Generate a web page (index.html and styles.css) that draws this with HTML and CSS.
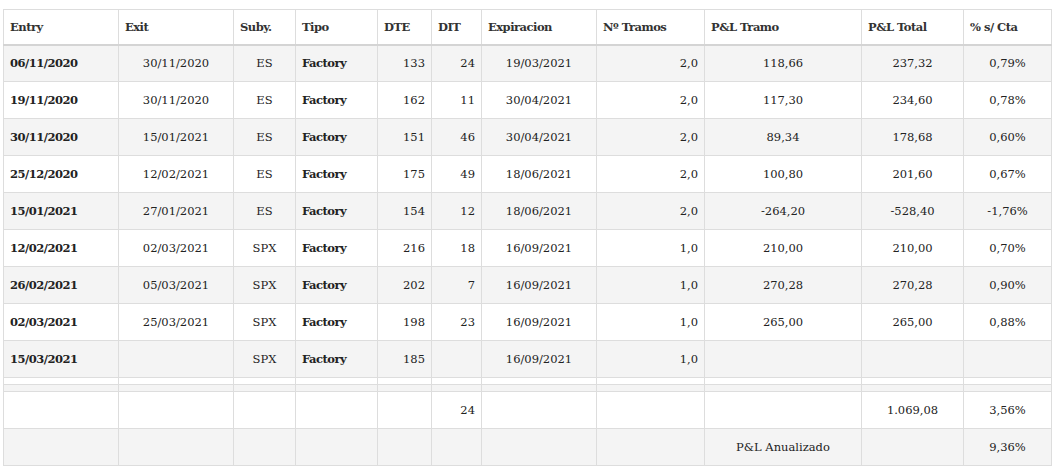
FILE: index.html
```html
<!DOCTYPE html>
<html>
<head>
<meta charset="utf-8">
<link rel="stylesheet" href="styles.css">
</head>
<body>
<table class="trades">
  <colgroup>
    <col class="c-entry"><col class="c-exit"><col class="c-suby"><col class="c-tipo"><col class="c-dte"><col class="c-dit"><col class="c-exp"><col class="c-tramos"><col class="c-pltr"><col class="c-pltot"><col class="c-pct">
  </colgroup>
  <thead>
    <tr>
      <th>Entry</th><th>Exit</th><th>Suby.</th><th>Tipo</th><th>DTE</th><th>DIT</th><th>Expiracion</th><th>Nº Tramos</th><th>P&amp;L Tramo</th><th>P&amp;L Total</th><th>% s/ Cta</th>
    </tr>
  </thead>
  <tbody>
    <tr><td class="b">06/11/2020</td><td class="c">30/11/2020</td><td class="c">ES</td><td class="b">Factory</td><td class="r">133</td><td class="r">24</td><td class="c">19/03/2021</td><td class="r">2,0</td><td class="c">118,66</td><td class="c">237,32</td><td class="c">0,79%</td></tr>
    <tr><td class="b">19/11/2020</td><td class="c">30/11/2020</td><td class="c">ES</td><td class="b">Factory</td><td class="r">162</td><td class="r">11</td><td class="c">30/04/2021</td><td class="r">2,0</td><td class="c">117,30</td><td class="c">234,60</td><td class="c">0,78%</td></tr>
    <tr><td class="b">30/11/2020</td><td class="c">15/01/2021</td><td class="c">ES</td><td class="b">Factory</td><td class="r">151</td><td class="r">46</td><td class="c">30/04/2021</td><td class="r">2,0</td><td class="c">89,34</td><td class="c">178,68</td><td class="c">0,60%</td></tr>
    <tr><td class="b">25/12/2020</td><td class="c">12/02/2021</td><td class="c">ES</td><td class="b">Factory</td><td class="r">175</td><td class="r">49</td><td class="c">18/06/2021</td><td class="r">2,0</td><td class="c">100,80</td><td class="c">201,60</td><td class="c">0,67%</td></tr>
    <tr><td class="b">15/01/2021</td><td class="c">27/01/2021</td><td class="c">ES</td><td class="b">Factory</td><td class="r">154</td><td class="r">12</td><td class="c">18/06/2021</td><td class="r">2,0</td><td class="c">-264,20</td><td class="c">-528,40</td><td class="c">-1,76%</td></tr>
    <tr><td class="b">12/02/2021</td><td class="c">02/03/2021</td><td class="c">SPX</td><td class="b">Factory</td><td class="r">216</td><td class="r">18</td><td class="c">16/09/2021</td><td class="r">1,0</td><td class="c">210,00</td><td class="c">210,00</td><td class="c">0,70%</td></tr>
    <tr><td class="b">26/02/2021</td><td class="c">05/03/2021</td><td class="c">SPX</td><td class="b">Factory</td><td class="r">202</td><td class="r">7</td><td class="c">16/09/2021</td><td class="r">1,0</td><td class="c">270,28</td><td class="c">270,28</td><td class="c">0,90%</td></tr>
    <tr><td class="b">02/03/2021</td><td class="c">25/03/2021</td><td class="c">SPX</td><td class="b">Factory</td><td class="r">198</td><td class="r">23</td><td class="c">16/09/2021</td><td class="r">1,0</td><td class="c">265,00</td><td class="c">265,00</td><td class="c">0,88%</td></tr>
    <tr><td class="b">15/03/2021</td><td class="c"></td><td class="c">SPX</td><td class="b">Factory</td><td class="r">185</td><td class="r"></td><td class="c">16/09/2021</td><td class="r">1,0</td><td class="c"></td><td class="c"></td><td class="c"></td></tr>
    <tr class="thin"><td></td><td></td><td></td><td></td><td></td><td></td><td></td><td></td><td></td><td></td><td></td></tr>
    <tr class="thin"><td></td><td></td><td></td><td></td><td></td><td></td><td></td><td></td><td></td><td></td><td></td></tr>
    <tr><td></td><td></td><td></td><td></td><td></td><td class="r">24</td><td></td><td></td><td></td><td class="c">1.069,08</td><td class="c">3,56%</td></tr>
    <tr><td></td><td></td><td></td><td></td><td></td><td></td><td></td><td></td><td class="c">P&amp;L Anualizado</td><td></td><td class="c">9,36%</td></tr>
  </tbody>
</table>
</body>
</html>
```

FILE: styles.css
```css
html, body {
  margin: 0;
  padding: 0;
  background: #fff;
}
body {
  padding: 9px 0 0 3px;
  font-family: "DejaVu Serif", "Liberation Serif", serif;
  font-size: 11.5px;
  color: #222;
}
.trades {
  border-collapse: collapse;
  table-layout: fixed;
  width: 1048px;
}
.c-entry { width: 115px; }
.c-exit { width: 115px; }
.c-suby { width: 62px; }
.c-tipo { width: 82px; }
.c-dte { width: 54px; }
.c-dit { width: 50px; }
.c-exp { width: 115px; }
.c-tramos { width: 108px; }
.c-pltr { width: 157px; }
.c-pltot { width: 102px; }
.c-pct { width: 88px; }
.trades th,
.trades td {
  border: 1px solid #ddd;
  padding: 0 6px;
  height: 37px;
  box-sizing: border-box;
  line-height: 16px;
  white-space: nowrap;
  vertical-align: middle;
}
.trades th {
  text-align: left;
  font-weight: bold;
  color: #333;
  height: 35px;
  letter-spacing: -0.5px;
  border-bottom: 2px solid #d4d4d4;
}
.trades tbody tr:nth-child(odd) td {
  background: #f4f4f4;
}
.trades tr.thin td {
  height: 7px;
  padding: 0;
  line-height: 0;
}
.b { font-weight: bold; text-align: left; letter-spacing: -0.5px; padding-left: 5px; }
.c { text-align: center; }
.r { text-align: right; }
```
